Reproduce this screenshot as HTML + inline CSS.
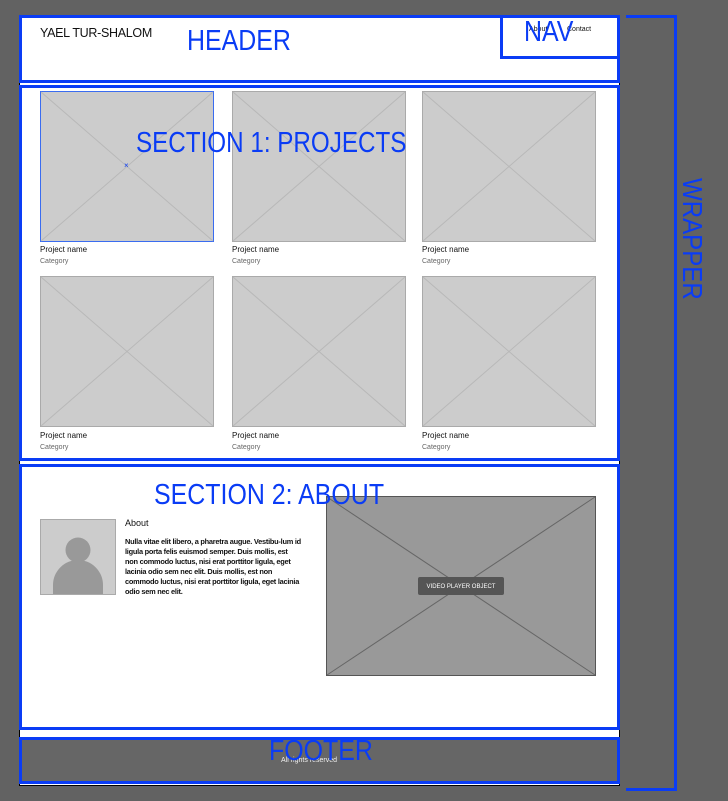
<!DOCTYPE html>
<html><head><meta charset="utf-8"><style>
*{margin:0;padding:0;box-sizing:border-box}
body{width:728px;height:801px;background:#626262;position:relative;overflow:hidden;font-family:"Liberation Sans",sans-serif}
.a{position:absolute}
.blue{border:3px solid #0a3cf5}
.lbl{position:absolute;color:#0a3cf5;font-size:29px;white-space:nowrap;transform-origin:left top;transform:scaleX(.86)}
.pn{position:absolute;font-size:8px;color:#111}
.ct{position:absolute;font-size:7px;color:#666}
</style></head><body>
<div class="a" style="left:19px;top:16px;width:601px;height:770px;background:#fff;border:1px solid #000"></div>
<div class="a" style="left:20px;top:738px;width:599px;height:46px;background:#666"></div>
<div class="a blue" style="left:19px;top:15px;width:601px;height:68px"></div>
<div class="a blue" style="left:500px;top:15px;width:120px;height:44px"></div>
<div class="a blue" style="left:19px;top:85px;width:601px;height:376px"></div>
<div class="a blue" style="left:19px;top:464px;width:601px;height:266px"></div>
<div class="a blue" style="left:19px;top:737px;width:601px;height:47px"></div>
<div class="a" style="left:626px;top:15px;width:51px;height:776px;border:3px solid #0a3cf5;border-left:none"></div>

<div class="a" style="left:40px;top:26px;font-size:12.5px;color:#111;letter-spacing:-.3px">YAEL TUR-SHALOM</div>
<div class="a" style="left:529px;top:26px;font-size:7px;color:#111">About</div>
<div class="a" style="left:567px;top:26px;font-size:7px;color:#111">Contact</div>

<svg class="a" style="left:0;top:0" width="728" height="801">
<g stroke="#aaa" stroke-width="1" fill="#cccccc">
<rect x="40.5" y="91.5" width="173" height="150" stroke="#3a6cf0"/>
<rect x="232.5" y="91.5" width="173" height="150"/>
<rect x="422.5" y="91.5" width="173" height="150"/>
<rect x="40.5" y="276.5" width="173" height="150"/>
<rect x="232.5" y="276.5" width="173" height="150"/>
<rect x="422.5" y="276.5" width="173" height="150"/>
</g>
<g stroke="#b8b8b8" stroke-width="1">
<path d="M41 92L213 241M213 92L41 241M233 92L405 241M405 92L233 241M423 92L595 241M595 92L423 241M41 277L213 426M213 277L41 426M233 277L405 426M405 277L233 426M423 277L595 426M595 277L423 426"/>
</g>
<text x="124" y="168" font-size="8" fill="#0a3cf5" font-family="Liberation Sans">×</text>
<rect x="40.5" y="519.5" width="75" height="75" fill="#ccc" stroke="#aaa"/>
<circle cx="78" cy="550" r="12.5" fill="#999"/>
<path d="M53 594V585A25 25 0 0 1 103 585V594Z" fill="#999"/>
<rect x="326.5" y="496.5" width="269" height="179" fill="#999" stroke="#555"/>
<path d="M327 497L595 675M595 497L327 675" stroke="#666" stroke-width="1"/>
<rect x="418" y="577" width="86" height="18" rx="2" fill="#555"/>
<text x="461" y="588" font-size="6" fill="#fff" text-anchor="middle" font-family="Liberation Sans">VIDEO PLAYER OBJECT</text>
</svg>

<div class="pn" style="left:40px;top:245px">Project name</div><div class="ct" style="left:40px;top:258px">Category</div>
<div class="pn" style="left:232px;top:245px">Project name</div><div class="ct" style="left:232px;top:258px">Category</div>
<div class="pn" style="left:422px;top:245px">Project name</div><div class="ct" style="left:422px;top:258px">Category</div>
<div class="pn" style="left:40px;top:431px">Project name</div><div class="ct" style="left:40px;top:444px">Category</div>
<div class="pn" style="left:232px;top:431px">Project name</div><div class="ct" style="left:232px;top:444px">Category</div>
<div class="pn" style="left:422px;top:431px">Project name</div><div class="ct" style="left:422px;top:444px">Category</div>

<div class="a" style="left:125px;top:518px;font-size:9px;color:#111">About</div>
<div class="a" style="left:125px;top:537px;width:176px;font-size:7.4px;line-height:10px;color:#111;font-weight:bold;letter-spacing:-.25px">Nulla vitae elit libero, a pharetra augue. Vestibu-lum id ligula porta felis euismod semper. Duis mollis, est non commodo luctus, nisi erat porttitor ligula, eget lacinia odio sem nec elit. Duis mollis, est non commodo luctus, nisi erat porttitor ligula, eget lacinia odio sem nec elit.</div>

<div class="a" style="left:281px;top:757px;font-size:7px;color:#eee">All rights reserved</div>

<div class="lbl" style="left:187px;top:25px">HEADER</div>
<div class="lbl" style="left:524px;top:16px">NAV</div>
<div class="lbl" style="left:136px;top:127px;transform:scaleX(.835)">SECTION 1: PROJECTS</div>
<div class="lbl" style="left:154px;top:479px;transform:scaleX(.86)">SECTION 2: ABOUT</div>
<div class="lbl" style="left:269px;top:735px">FOOTER</div>
<div class="a" style="left:708px;top:178px;transform-origin:left top;transform:rotate(90deg) scaleX(.86);color:#0a3cf5;font-size:28px;white-space:nowrap">WRAPPER</div>
</body></html>
